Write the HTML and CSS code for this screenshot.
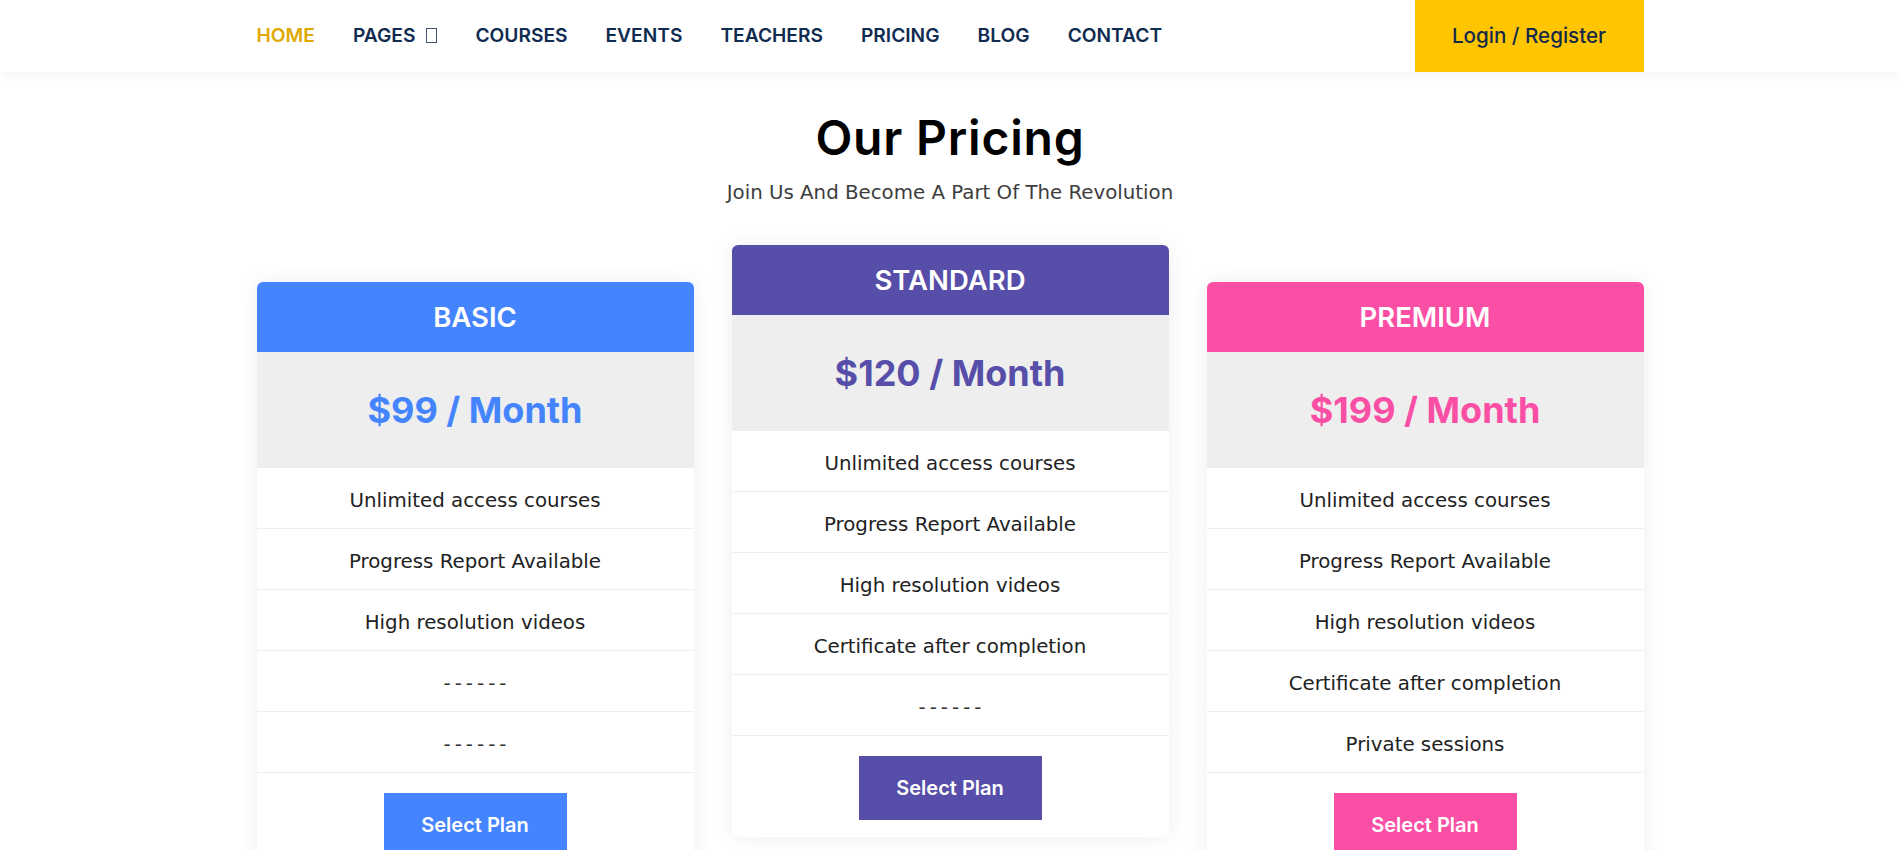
FILE: index.html
```html
<!DOCTYPE html>
<html lang="en">
<head>
<meta charset="utf-8">
<title>Our Pricing</title>
<link rel="stylesheet" href="styles.css">
</head>
<body>
<header class="topbar">
  <div class="container bar-inner">
    <nav class="menu">
      <a class="menu-link active" href="#">Home</a>
      <a class="menu-link" href="#">Pages <span class="tofu"></span></a>
      <a class="menu-link" href="#">Courses</a>
      <a class="menu-link" href="#">Events</a>
      <a class="menu-link" href="#">Teachers</a>
      <a class="menu-link" href="#">Pricing</a>
      <a class="menu-link" href="#">Blog</a>
      <a class="menu-link" href="#">Contact</a>
    </nav>
    <a class="login" href="#">Login / Register</a>
  </div>
</header>

<section class="pricing">
  <h2 class="title">Our Pricing</h2>
  <p class="subtitle">Join Us And Become A Part Of The Revolution</p>

  <div class="container plans">
    <div class="plan plan-basic">
      <div class="plan-head">BASIC</div>
      <div class="plan-price">$99 / Month</div>
      <ul class="features">
        <li>Unlimited access courses</li>
        <li>Progress Report Available</li>
        <li>High resolution videos</li>
        <li class="dash">------</li>
        <li class="dash">------</li>
      </ul>
      <div class="plan-foot"><a class="select" href="#">Select Plan</a></div>
    </div>

    <div class="plan plan-standard">
      <div class="plan-head">STANDARD</div>
      <div class="plan-price">$120 / Month</div>
      <ul class="features">
        <li>Unlimited access courses</li>
        <li>Progress Report Available</li>
        <li>High resolution videos</li>
        <li>Certificate after completion</li>
        <li class="dash">------</li>
      </ul>
      <div class="plan-foot"><a class="select" href="#">Select Plan</a></div>
    </div>

    <div class="plan plan-premium">
      <div class="plan-head">PREMIUM</div>
      <div class="plan-price">$199 / Month</div>
      <ul class="features">
        <li>Unlimited access courses</li>
        <li>Progress Report Available</li>
        <li>High resolution videos</li>
        <li>Certificate after completion</li>
        <li>Private sessions</li>
      </ul>
      <div class="plan-foot"><a class="select" href="#">Select Plan</a></div>
    </div>
  </div>
</section>
</body>
</html>
```

FILE: styles.css
```css
* { box-sizing: border-box; }

body {
  margin: 0;
  background: #ffffff;
  font-family: "DejaVu Sans", sans-serif;
  color: #222222;
}

.container {
  width: 1387px;
  margin: 0 auto;
}

/* ---------- top bar ---------- */
.topbar {
  height: 72px;
  background: #ffffff;
  box-shadow: 0 2px 12px rgba(0, 0, 0, 0.06);
  position: relative;
  z-index: 2;
}

.bar-inner {
  display: flex;
  align-items: center;
  height: 72px;
}

.menu {
  display: flex;
  align-items: center;
  gap: 38px;
  padding-bottom: 2px;
}

.menu-link {
  font-family: Inter, sans-serif;
  font-weight: 600;
  font-size: 19.2px;
  text-transform: uppercase;
  color: #0f2b50;
  text-decoration: none;
  display: flex;
  align-items: center;
}

.menu-link.active { color: #e0a900; }

.tofu {
  display: inline-block;
  width: 11px;
  height: 15px;
  border: 1px solid #41536e;
  margin-left: 11px;
}

.login {
  margin-left: auto;
  width: 229px;
  height: 72px;
  padding-bottom: 2px;
  background: #ffc600;
  color: #13294b;
  font-family: Inter, sans-serif;
  font-weight: 500;
  font-size: 20.6px;
  text-decoration: none;
  display: flex;
  align-items: center;
  justify-content: center;
}

/* ---------- pricing ---------- */
.pricing {
  text-align: center;
}

.title {
  margin: 37px 0 0;
  font-family: Inter, sans-serif;
  font-weight: 600;
  font-size: 48px;
  letter-spacing: 0.8px;
  line-height: 1.2;
  color: #000000;
}

.subtitle {
  margin: 12px 0 0;
  font-size: 19.8px;
  line-height: 27px;
  color: #3d3d3d;
}

.plans {
  display: flex;
  align-items: flex-start;
  gap: 38px;
  margin-top: 39px;
}

.plan {
  width: 437px;
  background: #ffffff;
  border-radius: 6px;
  box-shadow: 0 0 22px rgba(0, 0, 0, 0.07);
  overflow: hidden;
}

.plan-basic, .plan-premium { margin-top: 37px; }

.plan-head {
  height: 70px;
  display: flex;
  align-items: center;
  justify-content: center;
  font-family: Inter, sans-serif;
  font-weight: 600;
  font-size: 27.5px;
  color: #ffffff;
}

.plan-price {
  height: 116px;
  background: #eeeeee;
  display: flex;
  align-items: center;
  justify-content: center;
  font-family: Inter, sans-serif;
  font-weight: 700;
  font-size: 36px;
}

.plan-basic .plan-head { background: #4584ff; }
.plan-basic .plan-price { color: #4584ff; }
.plan-basic .select { background: #4584ff; }

.plan-standard .plan-head { background: #564ea8; }
.plan-standard .plan-price { color: #564ea8; }
.plan-standard .select { background: #564ea8; }

.plan-premium .plan-head { background: #fa4fa5; }
.plan-premium .plan-price { color: #fa4fa5; }
.plan-premium .select { background: #fa4fa5; }

.features {
  list-style: none;
  margin: 0;
  padding: 0;
}

.features li {
  height: 61px;
  padding-top: 5px;
  border-bottom: 1px solid #eeeeee;
  display: flex;
  align-items: center;
  justify-content: center;
  font-size: 19.8px;
  color: #222222;
}

.features li.dash {
  letter-spacing: 4px;
  color: #333333;
  padding-left: 4px;
}

.plan-foot {
  padding: 20px 0 17px;
  display: flex;
  justify-content: center;
}

.select {
  width: 183px;
  height: 64px;
  display: flex;
  align-items: center;
  justify-content: center;
  color: #ffffff;
  text-decoration: none;
  font-family: Inter, sans-serif;
  font-weight: 600;
  font-size: 20px;
}
```
